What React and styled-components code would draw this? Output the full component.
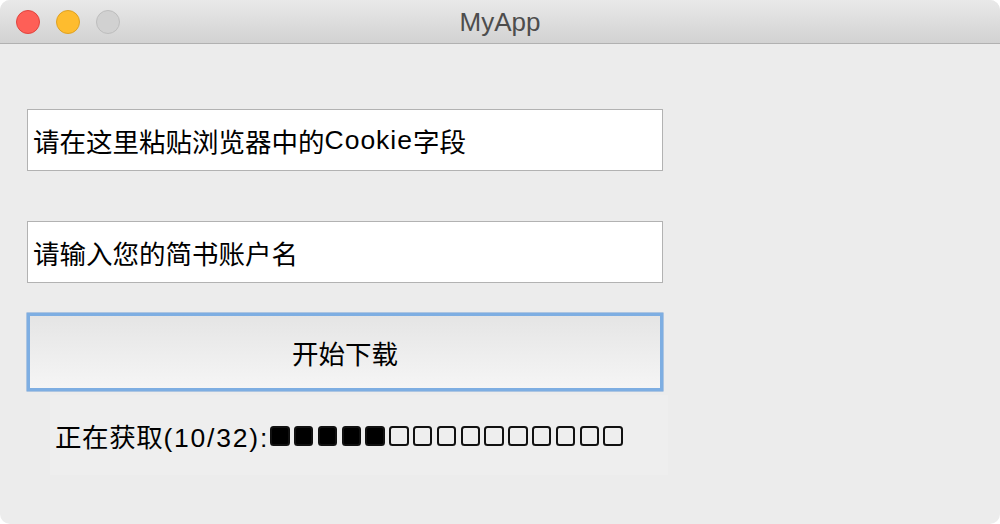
import React from 'react'
import styled, { createGlobalStyle } from 'styled-components'

const GlobalStyle = createGlobalStyle`
  html, body {
    margin: 0;
    padding: 0;
    background: #ffffff;
  }
  body {
    font-family: "Liberation Sans", "Noto Sans CJK SC", sans-serif;
  }
`

function App() {
    const done = 5
    const total = 15
    const cells = Array.from({ length: total }, (_, i) => i < done)

    return (
        <>
            <GlobalStyle />
            <Window>
                <TitleBar>
                    <Lights>
                        <Light color="#fe5f57" edge="#e0443e" />
                        <Light color="#febc2e" edge="#dea123" />
                        <Light color="#d1d1d1" edge="#bdbdbd" />
                    </Lights>
                    <Title>MyApp</Title>
                </TitleBar>

                <Body>
                    <Field>请在这里粘贴浏览器中的<Latin>Cookie</Latin>字段</Field>
                    <Field gap={50}>请输入您的简书账户名</Field>
                    <StartButton>开始下载</StartButton>
                    <Status>
                        <StatusText>正在获取<Latin wide>(10/32):</Latin></StatusText>
                        <Cells role="img" aria-label="■■■■■□□□□□□□□□□">
                            {cells.map((filled, i) => (
                                <Cell key={i} filled={filled} />
                            ))}
                        </Cells>
                    </Status>
                </Body>
            </Window>
        </>
    )
}

export default App

const Window = styled.div`
  width: 1000px;
  height: 524px;
  border-radius: 10px;
  overflow: hidden;
  background: #ececec;
  display: flex;
  flex-direction: column;
`

const TitleBar = styled.div`
  height: 43px;
  flex-shrink: 0;
  position: relative;
  display: flex;
  align-items: center;
  justify-content: center;
  background: linear-gradient(#e9e9e9, #d2d2d2);
  border-bottom: 1px solid #b1b1b1;
`

const Lights = styled.div`
  position: absolute;
  left: 16px;
  top: 10px;
  display: flex;
  gap: 16px;
`

const Light = styled.span`
  width: 22px;
  height: 22px;
  border-radius: 50%;
  background: ${p => p.color};
  border: 1px solid ${p => p.edge};
`

const Title = styled.div`
  font-family: "Liberation Sans", "Noto Sans", sans-serif;
  font-size: 26px;
  color: #4d4d4d;
  margin-top: 1px;
`

const Body = styled.div`
  padding: 65px 0 0 27px;
  display: flex;
  flex-direction: column;
  align-items: flex-start;
`

const Latin = styled.span`
  letter-spacing: ${p => (p.wide ? 1.8 : 1)}px;
`

const Field = styled.div`
  box-sizing: border-box;
  width: 636px;
  height: 62px;
  margin-top: ${p => p.gap || 0}px;
  padding-left: 5px;
  display: flex;
  align-items: center;
  background: #ffffff;
  border: 1px solid #b2b2b2;
  font-size: 26.5px;
  color: #000;
`

const StartButton = styled.div`
  box-sizing: border-box;
  width: 636px;
  height: 78px;
  margin-top: 30px;
  display: flex;
  align-items: center;
  justify-content: center;
  border: 3px solid #7eaee2;
  box-shadow: 0 0 0 0.5px #6f9fd6;
  background: linear-gradient(#e5e5e5, #f5f5f5);
  font-size: 26.5px;
  color: #000;
`

const Status = styled.div`
  box-sizing: border-box;
  width: 618px;
  height: 80px;
  margin: 4px 0 0 23px;
  padding-left: 5px;
  display: flex;
  align-items: center;
  background: #eeeeee;
  font-size: 26.5px;
  color: #000;
`

const StatusText = styled.span`
  letter-spacing: 0.6px;
`

const Cells = styled.span`
  display: flex;
  gap: 4.3px;
  margin-left: 1px;
  margin-top: 2px;
`

const Cell = styled.span`
  box-sizing: border-box;
  flex-shrink: 0;
  width: 19.5px;
  height: 19.5px;
  border-radius: 3.5px;
  border: 2px solid #111;
  background: ${p => (p.filled ? '#000' : 'transparent')};
`
